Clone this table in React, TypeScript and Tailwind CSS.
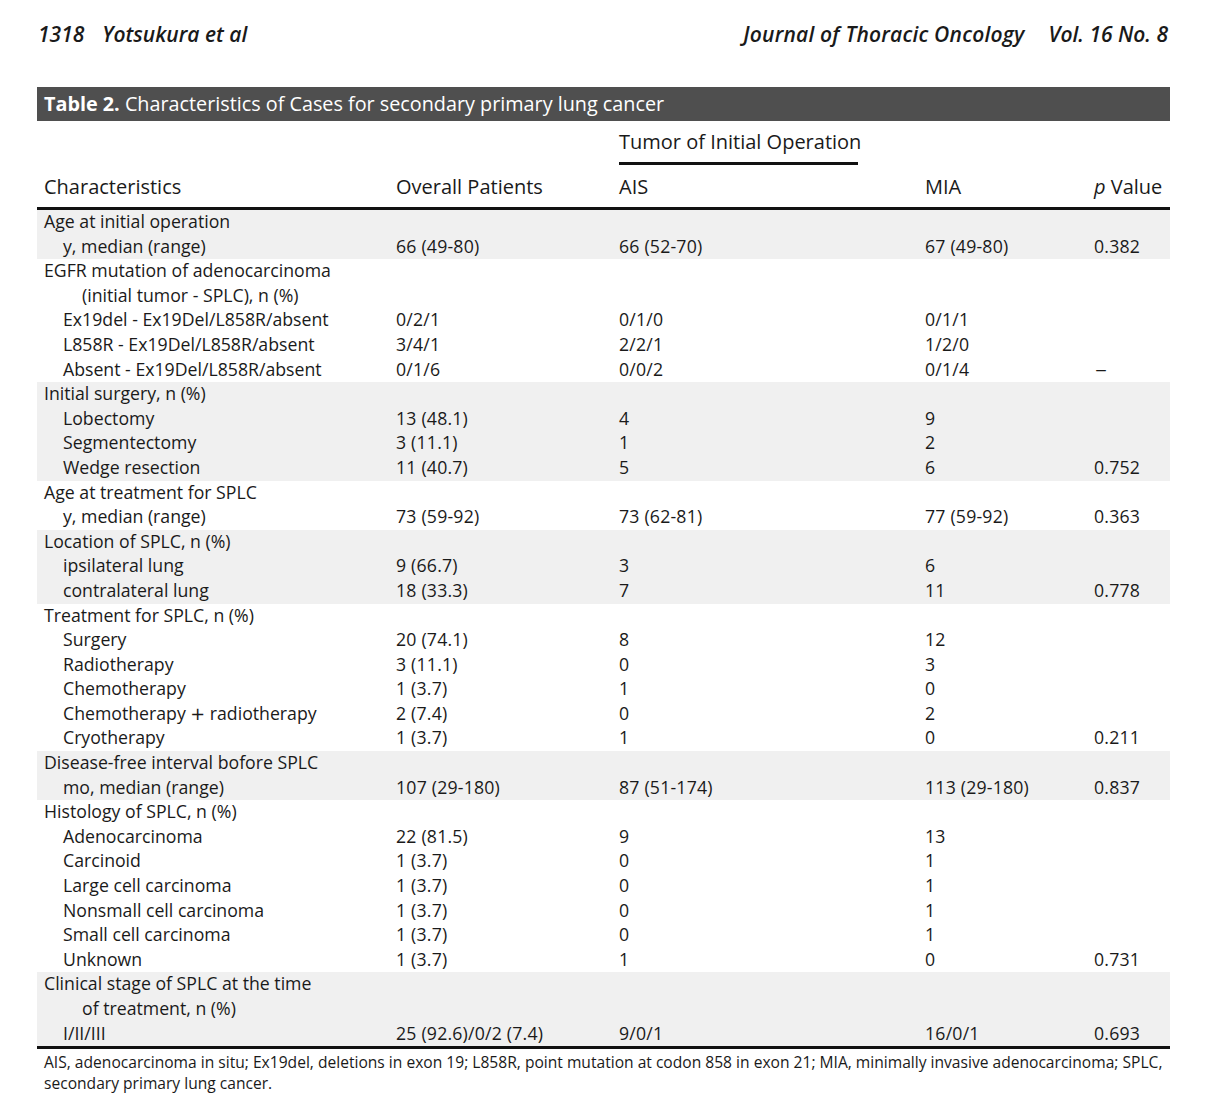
import React from 'react';

type Row = { label: string; indent: 0 | 1 | 2; values?: string[] };

const groups: Row[][] = [
  [
    { label: 'Age at initial operation', indent: 0 },
    { label: 'y, median (range)', indent: 1, values: ['66 (49-80)', '66 (52-70)', '67 (49-80)', '0.382'] },
  ],
  [
    { label: 'EGFR mutation of adenocarcinoma', indent: 0 },
    { label: '(initial tumor - SPLC), n (%)', indent: 2 },
    { label: 'Ex19del - Ex19Del/L858R/absent', indent: 1, values: ['0/2/1', '0/1/0', '0/1/1', ''] },
    { label: 'L858R - Ex19Del/L858R/absent', indent: 1, values: ['3/4/1', '2/2/1', '1/2/0', ''] },
    { label: 'Absent - Ex19Del/L858R/absent', indent: 1, values: ['0/1/6', '0/0/2', '0/1/4', '–'] },
  ],
  [
    { label: 'Initial surgery, n (%)', indent: 0 },
    { label: 'Lobectomy', indent: 1, values: ['13 (48.1)', '4', '9', ''] },
    { label: 'Segmentectomy', indent: 1, values: ['3 (11.1)', '1', '2', ''] },
    { label: 'Wedge resection', indent: 1, values: ['11 (40.7)', '5', '6', '0.752'] },
  ],
  [
    { label: 'Age at treatment for SPLC', indent: 0 },
    { label: 'y, median (range)', indent: 1, values: ['73 (59-92)', '73 (62-81)', '77 (59-92)', '0.363'] },
  ],
  [
    { label: 'Location of SPLC, n (%)', indent: 0 },
    { label: 'ipsilateral lung', indent: 1, values: ['9 (66.7)', '3', '6', ''] },
    { label: 'contralateral lung', indent: 1, values: ['18 (33.3)', '7', '11', '0.778'] },
  ],
  [
    { label: 'Treatment for SPLC, n (%)', indent: 0 },
    { label: 'Surgery', indent: 1, values: ['20 (74.1)', '8', '12', ''] },
    { label: 'Radiotherapy', indent: 1, values: ['3 (11.1)', '0', '3', ''] },
    { label: 'Chemotherapy', indent: 1, values: ['1 (3.7)', '1', '0', ''] },
    { label: 'Chemotherapy + radiotherapy', indent: 1, values: ['2 (7.4)', '0', '2', ''] },
    { label: 'Cryotherapy', indent: 1, values: ['1 (3.7)', '1', '0', '0.211'] },
  ],
  [
    { label: 'Disease-free interval bofore SPLC', indent: 0 },
    { label: 'mo, median (range)', indent: 1, values: ['107 (29-180)', '87 (51-174)', '113 (29-180)', '0.837'] },
  ],
  [
    { label: 'Histology of SPLC, n (%)', indent: 0 },
    { label: 'Adenocarcinoma', indent: 1, values: ['22 (81.5)', '9', '13', ''] },
    { label: 'Carcinoid', indent: 1, values: ['1 (3.7)', '0', '1', ''] },
    { label: 'Large cell carcinoma', indent: 1, values: ['1 (3.7)', '0', '1', ''] },
    { label: 'Nonsmall cell carcinoma', indent: 1, values: ['1 (3.7)', '0', '1', ''] },
    { label: 'Small cell carcinoma', indent: 1, values: ['1 (3.7)', '0', '1', ''] },
    { label: 'Unknown', indent: 1, values: ['1 (3.7)', '1', '0', '0.731'] },
  ],
  [
    { label: 'Clinical stage of SPLC at the time', indent: 0 },
    { label: 'of treatment, n (%)', indent: 2 },
    { label: 'I/II/III', indent: 1, values: ['25 (92.6)/0/2 (7.4)', '9/0/1', '16/0/1', '0.693'] },
  ],
];

const cols = 'grid grid-cols-[359px_223px_306px_169px_76px]';

function TableRow({ row }: { row: Row }) {
  const pad = row.indent === 0 ? 'pl-[7px]' : row.indent === 1 ? 'pl-[26px]' : 'pl-[45px]';
  return (
    <div className={`${cols} h-[24.6px] leading-[22px]`}>
      <div className={`${pad} whitespace-nowrap`}>
        {row.label.includes(' + ') ? (
          <>
            Chemotherapy <span className="font-['DejaVu_Sans']">+</span> radiotherapy
          </>
        ) : (
          row.label
        )}
      </div>
      {(row.values ?? ['', '', '', '']).map((v, i) => (
        <div key={i} className={`whitespace-nowrap ${v === '–' ? 'pl-[1px] scale-x-[1.3] origin-left' : 'tracking-[0.2px]'}`}>
          {v}
        </div>
      ))}
    </div>
  );
}

export default function App() {
  return (
    <div className="w-[1206px] min-h-[1108px] bg-white text-[#1a1a1a] font-['Open_Sans',sans-serif]">
      {/* running head */}
      <div className="flex justify-between items-center pt-[20px] pl-[38px] pr-[38px] text-[21px] leading-[28px] italic font-semibold">
        <div>
          <span>1318</span>
          <span className="ml-[18px]">Yotsukura et al</span>
        </div>
        <div>
          <span className="tracking-[0.2px]">Journal of Thoracic Oncology</span>
          <span className="ml-[24px]">Vol. 16 No. 8</span>
        </div>
      </div>

      <div className="ml-[37px] w-[1133px] mt-[39px]">
        {/* title bar */}
        <div className="h-[34px] bg-[#4f4f4f] text-white text-[19.8px] leading-[34px] pl-[7px] whitespace-nowrap">
          <span className="font-bold">Table 2.</span> Characteristics of Cases for secondary primary lung cancer
        </div>

        {/* column heads */}
        <div className="text-[20px] pt-[9px] pb-[8px]">
          <div className={cols}>
            <div />
            <div />
            <div className="col-span-2">
              <div className="leading-[24px] whitespace-nowrap">Tumor of Initial Operation</div>
              <div className="mt-[8px] h-[3px] w-[239px] bg-[#111]" />
            </div>
            <div />
          </div>
          <div className={`${cols} mt-[10px] leading-[24px]`}>
            <div className="pl-[7px]">Characteristics</div>
            <div>Overall Patients</div>
            <div>AIS</div>
            <div>MIA</div>
            <div className="whitespace-nowrap">
              <span className="italic">p</span> Value
            </div>
          </div>
        </div>
        <div className="h-[3px] bg-[#111]" />

        {/* body */}
        <div className="text-[17.7px]">
          {groups.map((g, gi) => (
            <div key={gi} className={gi % 2 === 0 ? 'bg-[#f0f0f0]' : 'bg-white'}>
              {g.map((r, ri) => (
                <TableRow key={ri} row={r} />
              ))}
            </div>
          ))}
        </div>
        <div className="h-[3px] bg-[#111]" />

        {/* footnote */}
        <div className="pl-[7px] pt-[3px] text-[15.6px] leading-[21px] whitespace-nowrap">
          AIS, adenocarcinoma in situ; Ex19del, deletions in exon 19; L858R, point mutation at codon 858 in exon 21; MIA, minimally invasive adenocarcinoma; SPLC,
          <br />
          secondary primary lung cancer.
        </div>
      </div>
    </div>
  );
}
